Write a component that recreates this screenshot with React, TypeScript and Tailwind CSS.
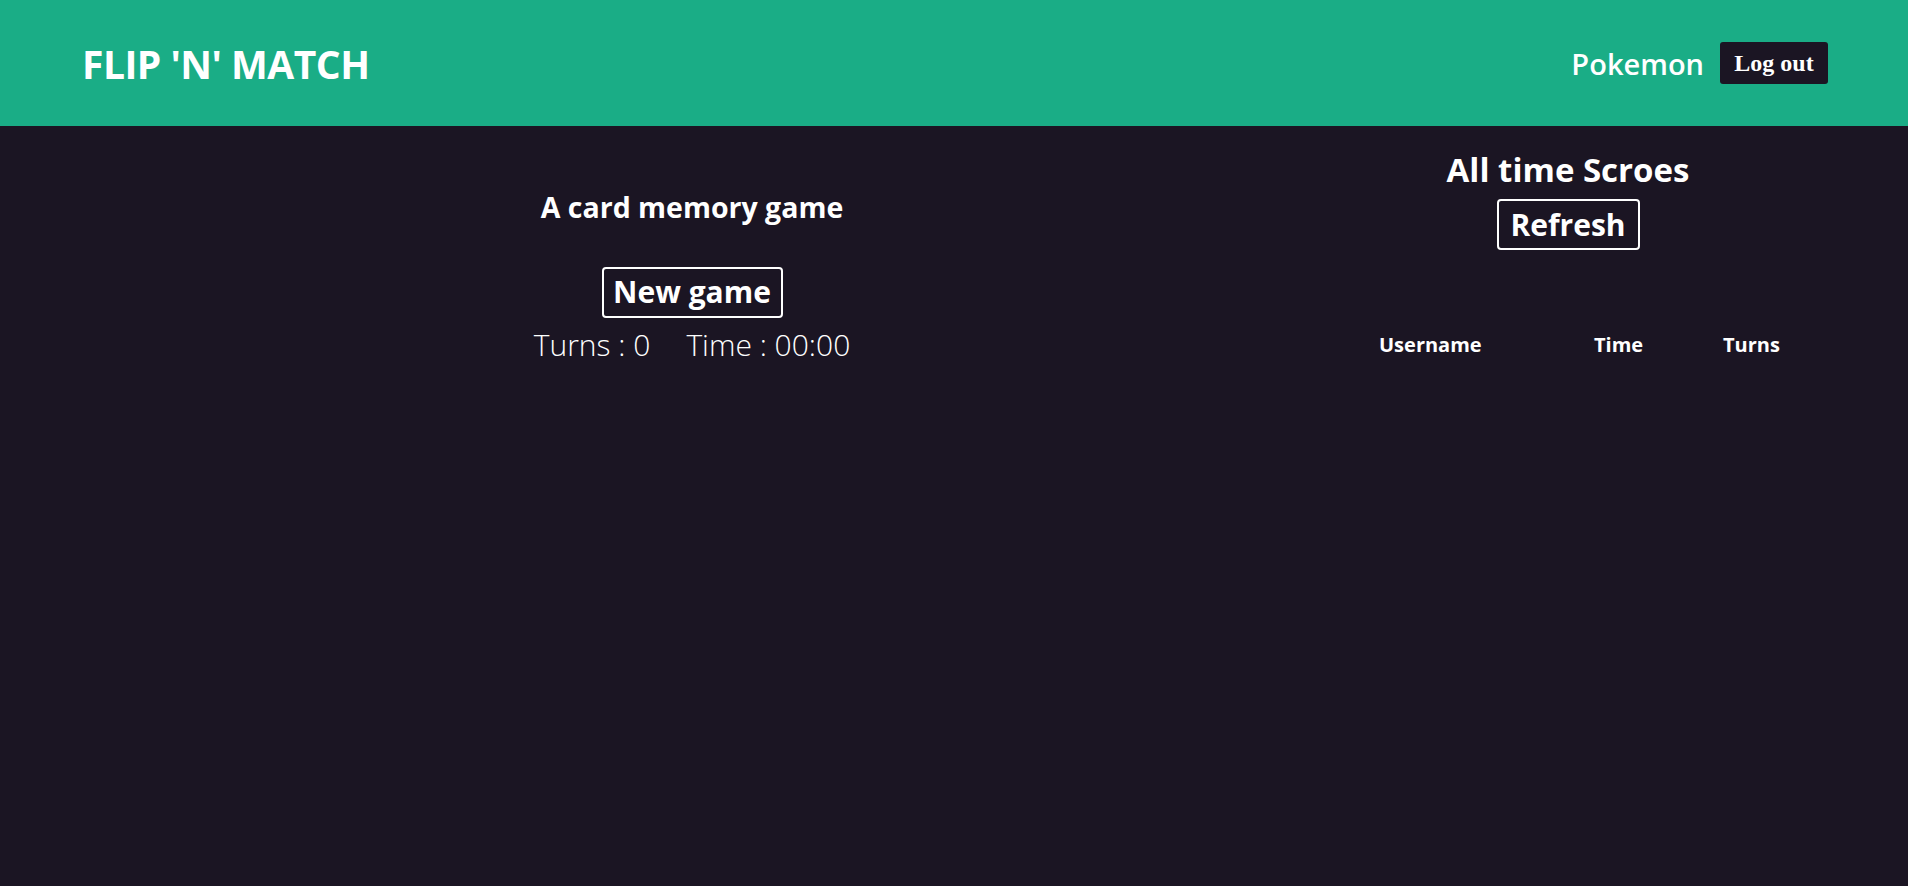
import React from "react";

export default function App() {
  const sans = "font-['Open_Sans',_'Lato',_sans-serif]";
  return (
    <div className={`min-h-[886px] w-full bg-[#1b1523] text-white ${sans}`}>
      <header className="flex h-[126px] items-center justify-between bg-[#1aad86] pl-[82px] pr-[80px]">
        <h1 className="text-[39px] font-bold leading-none tracking-[-0.5px]">FLIP 'N' MATCH</h1>
        <div className="flex items-center gap-[16px]">
          <span className="text-[29px] font-semibold leading-none">Pokemon</span>
          <button className="flex h-[42px] w-[108px] items-center justify-center rounded-[3px] bg-[#1b1523] font-['Liberation_Serif',_serif] text-[24px] font-bold leading-none text-white">
            Log out
          </button>
        </div>
      </header>
      <main className="flex">
        <section className="flex w-[1384px] flex-col items-center">
          <h2 className="mt-[67px] text-[28.5px] font-bold leading-none">A card memory game</h2>
          <button className="mt-[45px] flex h-[51px] w-[181px] items-center justify-center rounded-[4px] border-2 border-white text-[30px] font-bold leading-none">
            New game
          </button>
          <div className="mt-[12px] flex gap-[36px] text-[30px] font-light leading-none">
            <span>Turns : 0</span>
            <span>Time : 00:00</span>
          </div>
        </section>
        <section className="flex w-[368px] flex-col items-center">
          <h2 className="mt-[27px] text-[33px] font-bold leading-none">All time Scroes</h2>
          <button className="mt-[13px] flex h-[51px] w-[143px] items-center justify-center rounded-[4px] border-2 border-white text-[30px] font-bold leading-none">
            Refresh
          </button>
          <div className="mt-[85px] flex w-[440px] shrink-0 pl-[31px] text-[20px] font-bold leading-none">
            <span className="w-[215px]">Username</span>
            <span className="w-[129px]">Time</span>
            <span>Turns</span>
          </div>
        </section>
      </main>
    </div>
  );
}
